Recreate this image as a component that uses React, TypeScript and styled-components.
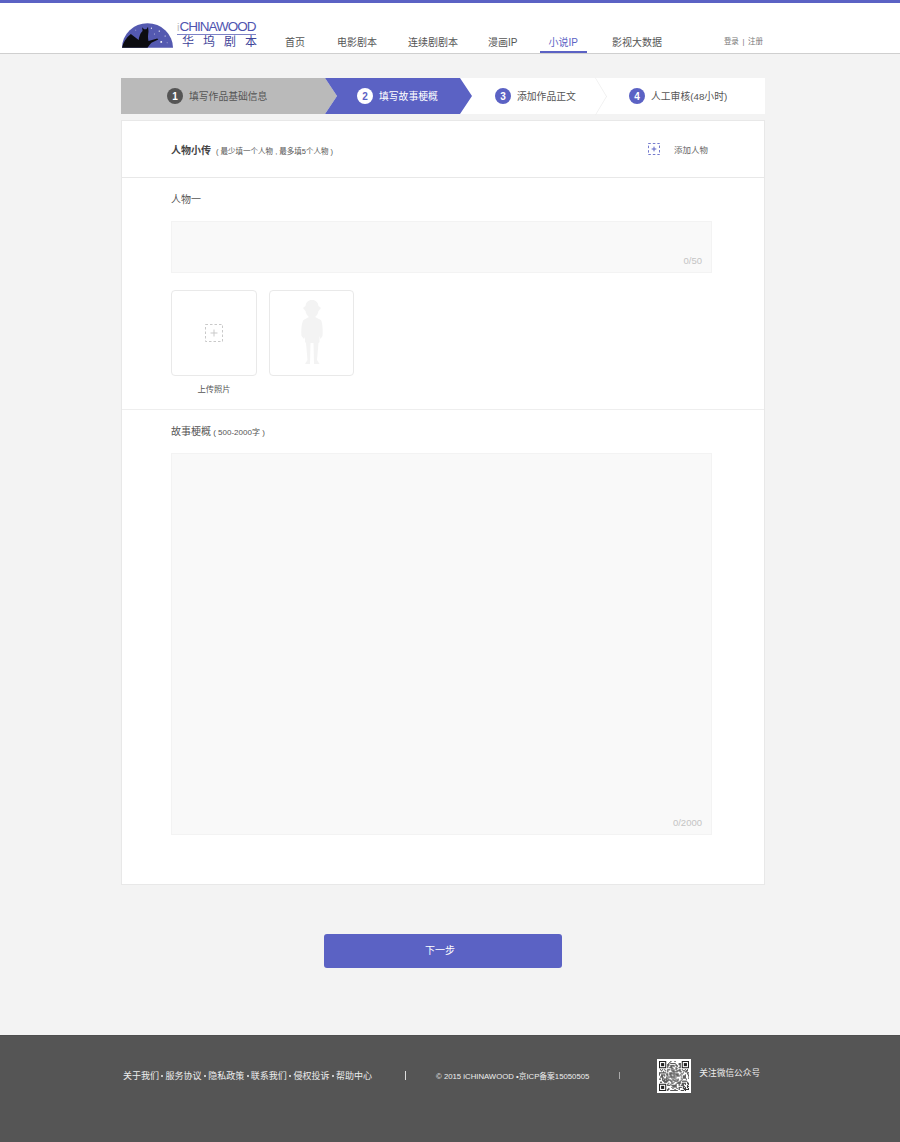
import React from 'react'
import styled, { createGlobalStyle } from 'styled-components'

const CJK = `"Liberation Sans", "Noto Sans CJK SC", sans-serif`
const PURPLE = '#5b62c4'

const GlobalStyle = createGlobalStyle`
  html, body {
    margin: 0;
    padding: 0;
    background: #f3f3f3;
    font-family: ${CJK};
  }
  * { box-sizing: border-box; }
`

const NAV = ['首页', '电影剧本', '连续剧剧本', '漫画IP', '小说IP', '影视大数据']
const NAV_GAPS = [0, 32, 31, 30, 31, 34]
const STEPS = ['填写作品基础信息', '填写故事梗概', '添加作品正文', '人工审核(48小时)']
const LINKS = ['关于我们', '服务协议', '隐私政策', '联系我们', '侵权投诉', '帮助中心']

const Logo = () => (
  <LogoBox>
    <svg width="51" height="26" viewBox="0 0 52 26">
      <path d="M0 25 A26 25 0 0 1 52 25 Z" fill="#5459b0" />
      <path
        d="M0 25 C1 20 4 15 9 11 L13 14 L17 17 C18 12 19 10 21 8 L20.500 4 L22.500 6 L25 6 L26.500 3.500 L27 8 C27 11 26 13 27 18 L36 15.500 L37 16.500 L30 20 C28 22 27 24 26 25 Z"
        fill="#0c0c10"
      />
      <g fill="#fff">
        <circle cx="30" cy="5" r=".6" />
        <circle cx="38" cy="8" r=".7" />
        <circle cx="44" cy="13" r=".6" />
        <circle cx="40" cy="19" r="1" />
        <circle cx="33" cy="11" r=".5" />
        <circle cx="14" cy="7" r=".5" />
        <circle cx="46" cy="20" r=".5" />
      </g>
    </svg>
    <LogoText>
      <LogoEn>
        <LogoI>i</LogoI>CHINAWOOD
      </LogoEn>
      <LogoCn>华坞剧本</LogoCn>
    </LogoText>
  </LogoBox>
)

const PlusBox = ({ size, color }: { size: number; color: string }) => (
  <svg width={size} height={size} viewBox="0 0 18 18">
    <rect
      x=".5"
      y=".5"
      width="17"
      height="17"
      fill="none"
      stroke={color}
      strokeDasharray="2.500 2"
      vectorEffect="non-scaling-stroke"
    />
    <path d="M9 5.500v7M5.500 9h7" stroke={color} vectorEffect="non-scaling-stroke" />
  </svg>
)

const Silhouette = () => (
  <svg width="24" height="66" viewBox="0 0 24 66">
    <path
      d="M12 0c4 0 6 2.500 6.500 6l2.500 2-2.500 3c-.5 3-2 5-3.500 6l6 3c1.500 3 2 10 1.500 16l-2 3-1-3v6l-1 1-1.500 17 2.500 4H14l-.5-21h-3L10 64H5l2.500-4L6 43l-1-1v-5l-1 2-2.500-3C1 30 1.500 23 3.500 20l5.500-3c-1.500-1-3-3-3.500-6L3 8l2.500-2C6 2.500 8 0 12 0z"
      fill="#f3f3f3"
    />
  </svg>
)

// 二维码只是图形，按固定种子铺点
const QrCode = () => {
  const n = 29
  const cells: React.ReactElement[] = []
  let seed = 7
  const inFinder = (x: number, y: number) =>
    (x < 8 && y < 8) || (x > n - 9 && y < 8) || (x < 8 && y > n - 9)
  for (let y = 0; y < n; y++) {
    for (let x = 0; x < n; x++) {
      seed = (seed * 137 + 59) % 1009
      if (!inFinder(x, y) && seed % 2 === 0) {
        cells.push(<rect key={`${x}-${y}`} x={x} y={y} width="1" height="1" />)
      }
    }
  }
  const finder = (x: number, y: number) => (
    <g key={`f${x}${y}`}>
      <rect x={x + 0.5} y={y + 0.5} width="6" height="6" fill="none" stroke="#222" />
      <rect x={x + 2} y={y + 2} width="3" height="3" />
    </g>
  )
  return (
    <QrBox>
      <svg width="30" height="30" viewBox="0 0 29 29" fill="#222">
        {cells}
        {finder(0, 0)}
        {finder(22, 0)}
        {finder(0, 22)}
      </svg>
    </QrBox>
  )
}

const App = () => {
  return (
    <>
      <GlobalStyle />
      <Header>
        <HeaderInner>
          <Logo />
          <Nav>
            {NAV.map((item, i) => (
              <NavItem key={item} $active={i === 4} $gap={NAV_GAPS[i]}>
                {item}
              </NavItem>
            ))}
          </Nav>
          <Auth>登录 | 注册</Auth>
        </HeaderInner>
      </Header>

      <Main>
        <Steps>
          {STEPS.map((label, i) => (
            <Step key={label} $index={i}>
              <StepNumber $index={i}>{i + 1}</StepNumber>
              {label}
            </Step>
          ))}
        </Steps>

        <Card>
          <CardHead>
            <CardTitle>
              人物小传
              <CardHint>( 最少填一个人物 , 最多填5个人物 )</CardHint>
            </CardTitle>
            <AddPerson>
              <PlusBox size={12} color="#5b62c4" />
              添加人物
            </AddPerson>
          </CardHead>

          <PersonSection>
            <FieldLabel>人物一</FieldLabel>
            <TextField $height={52}>
              <Count>0/50</Count>
            </TextField>
            <Photos>
              <PhotoColumn>
                <PhotoTile $width={86}>
                  <PlusBox size={18} color="#c9c9c9" />
                </PhotoTile>
                <PhotoCaption>上传照片</PhotoCaption>
              </PhotoColumn>
              <PhotoTile $width={85}>
                <Silhouette />
              </PhotoTile>
            </Photos>
          </PersonSection>

          <StorySection>
            <FieldLabel>
              故事梗概<SmallNote> ( 500-2000字 )</SmallNote>
            </FieldLabel>
            <TextField $height={382}>
              <Count>0/2000</Count>
            </TextField>
          </StorySection>
        </Card>

        <NextButton>下一步</NextButton>
      </Main>

      <Footer>
        <FooterLinks>
          {LINKS.map((link, i) => (
            <React.Fragment key={link}>
              {i > 0 && <Dot />}
              {link}
            </React.Fragment>
          ))}
        </FooterLinks>
        <FooterBar $left={33} />
        <Copyright>© 2015 iCHINAWOOD •京ICP备案15050505</Copyright>
        <FooterBar $left={30} $thin />
        <QrCode />
        <Follow>关注微信公众号</Follow>
      </Footer>
    </>
  )
}

const Header = styled.header`
  height: 54px;
  background: #fff;
  border-top: 3px solid ${PURPLE};
  border-bottom: 1px solid #cfcfcf;
`

const HeaderInner = styled.div`
  display: flex;
  align-items: flex-end;
  height: 50px;
  margin-left: 122px;
  width: 641px;
`

const LogoBox = styled.div`
  display: flex;
  align-items: flex-end;
  height: 46px;
  padding-bottom: 4px;
  width: 163px;
  svg { display: block; flex: none; }
`

const LogoText = styled.div`
  display: flex;
  flex-direction: column;
  margin-left: 4px;
  width: 79px;
`

const LogoEn = styled.div`
  font-size: 13.500px;
  line-height: 13px;
  letter-spacing: -1px;
  color: #4f55b0;
  border-bottom: 1px solid #7d82c6;
  white-space: nowrap;
`

const LogoI = styled.span`
  color: #bbb;
  font-size: 11px;
  margin-right: 1px;
`

const LogoCn = styled.div`
  font-size: 12px;
  line-height: 14px;
  letter-spacing: 9px;
  padding-left: 5px;
  color: #3f4499;
  white-space: nowrap;
`

const Nav = styled.nav`
  display: flex;
  flex: 1;
`

const NavItem = styled.a<{ $active?: boolean; $gap: number }>`
  position: relative;
  margin-left: ${(p) => p.$gap}px;
  font-size: 10px;
  line-height: 13px;
  padding-bottom: 4px;
  white-space: nowrap;
  color: ${(p) => (p.$active ? PURPLE : '#555')};
  ${(p) =>
    p.$active &&
    `&::after {
      content: '';
      position: absolute;
      left: -8px;
      right: -9px;
      bottom: 0;
      height: 2px;
      background: ${PURPLE};
    }`}
`

const Auth = styled.div`
  font-size: 7.500px;
  line-height: 10px;
  word-spacing: 1.500px;
  padding-bottom: 6px;
  color: #777;
  white-space: nowrap;
`

const Main = styled.main`
  width: 644px;
  margin-left: 121px;
  padding-top: 24px;
  height: 981px;
`

const Steps = styled.div`
  display: flex;
  height: 36px;
  background: #fff;
`

const stepWidths = [216, 147, 136, 169]
const stepPadding = [46, 32, 23, 21]
const stepBg = ['#bababa', PURPLE, 'transparent', 'transparent']
const stepColor = ['#555', '#fff', '#555', '#555']

const Step = styled.div<{ $index: number }>`
  position: relative;
  display: flex;
  align-items: center;
  gap: 6px;
  flex: none;
  font-size: 9.800px;
  white-space: nowrap;
  width: ${(p) => stepWidths[p.$index]}px;
  padding-left: ${(p) => stepPadding[p.$index]}px;
  color: ${(p) => stepColor[p.$index]};
  background: ${(p) => stepBg[p.$index]};
  ${(p) => p.$index === 0 && 'clip-path: polygon(0 0, calc(100% - 12px) 0, 100% 50%, calc(100% - 12px) 100%, 0 100%);'}
  ${(p) =>
    p.$index === 1 &&
    'margin-left: -12px; clip-path: polygon(0 0, calc(100% - 12px) 0, 100% 50%, calc(100% - 12px) 100%, 0 100%, 12px 50%);'}
  ${(p) =>
    p.$index === 2 &&
    `&::after {
      content: '';
      position: absolute;
      top: 5px;
      right: -1px;
      width: 26px;
      height: 26px;
      border-top: 1px solid #eee;
      border-right: 1px solid #eee;
      transform: scaleX(.6) rotate(45deg);
    }`}
`

const StepNumber = styled.span<{ $index: number }>`
  display: flex;
  align-items: center;
  justify-content: center;
  width: 16px;
  height: 16px;
  border-radius: 50%;
  font-size: 10px;
  font-weight: 700;
  background: ${(p) => (p.$index === 0 ? '#555' : p.$index === 1 ? '#fff' : PURPLE)};
  color: ${(p) => (p.$index === 1 ? PURPLE : '#fff')};
`

const Card = styled.section`
  margin-top: 6px;
  height: 765px;
  background: #fff;
  border: 1px solid #e8e8e8;
`

const CardHead = styled.div`
  display: flex;
  align-items: center;
  justify-content: space-between;
  height: 57px;
  padding: 0 56px 0 49px;
  border-bottom: 1px solid #e8e8e8;
`

const CardTitle = styled.h2`
  margin: 0;
  font-size: 10px;
  font-weight: 700;
  color: #444;
`

const CardHint = styled.span`
  margin-left: 5px;
  font-size: 7.500px;
  font-weight: 400;
  color: #555;
`

const AddPerson = styled.div`
  display: flex;
  align-items: center;
  gap: 14px;
  font-size: 8.500px;
  color: #666;
`

const PersonSection = styled.div`
  height: 232px;
  padding: 15px 52px 0 49px;
  border-bottom: 1px solid #eee;
`

const StorySection = styled.div`
  padding: 15px 52px 0 49px;
`

const FieldLabel = styled.div`
  height: 14px;
  font-size: 10px;
  line-height: 14px;
  color: #555;
`

const SmallNote = styled.span`
  font-size: 8px;
`

const TextField = styled.div<{ $height: number }>`
  display: flex;
  align-items: flex-end;
  justify-content: flex-end;
  height: ${(p) => p.$height}px;
  margin-top: 14px;
  padding: 0 9px 5px 0;
  background: #f9f9f9;
  border: 1px solid #f3f3f3;
`

const Count = styled.span`
  font-size: 9.500px;
  line-height: 12px;
  color: #c4c4c4;
`

const Photos = styled.div`
  display: flex;
  gap: 12px;
  margin-top: 17px;
`

const PhotoColumn = styled.div`
  display: flex;
  flex-direction: column;
  align-items: center;
`

const PhotoTile = styled.div<{ $width: number }>`
  display: flex;
  align-items: center;
  justify-content: center;
  width: ${(p) => p.$width}px;
  height: 86px;
  border: 1px solid #e9e9e9;
  border-radius: 4px;
  background: #fff;
`

const PhotoCaption = styled.div`
  margin-top: 7px;
  font-size: 8.300px;
  line-height: 12px;
  color: #555;
`

const NextButton = styled.button`
  display: block;
  width: 238px;
  height: 34px;
  margin: 49px 0 0 203px;
  padding: 0 6px 3px 0;
  border: 0;
  border-radius: 3px;
  background: ${PURPLE};
  color: #fff;
  font-family: ${CJK};
  font-size: 10px;
`

const Footer = styled.footer`
  display: flex;
  align-items: center;
  height: 107px;
  padding: 0 0 27px 123px;
  background: #555;
  border-top: 1px solid #4e4e4e;
  color: #eee;
  font-size: 9px;
  white-space: nowrap;
`

const FooterLinks = styled.div`
  display: flex;
  align-items: center;
`

const Dot = styled.i`
  width: 2px;
  height: 2px;
  margin: 0 2.300px;
  background: #eee;
  border-radius: 50%;
`

const FooterBar = styled.span<{ $left: number; $thin?: boolean }>`
  width: 1px;
  height: ${(p) => (p.$thin ? 7 : 9)}px;
  margin-left: ${(p) => p.$left}px;
  background: ${(p) => (p.$thin ? '#aaa' : '#ddd')};
`

const Copyright = styled.div`
  margin-left: 30px;
  font-size: 7.750px;
`

const QrBox = styled.div`
  display: flex;
  align-items: center;
  justify-content: center;
  width: 34px;
  height: 34px;
  margin: 0 0 0 37px;
  background: #fff;
`

const Follow = styled.div`
  margin: 0 0 6px 8px;
  font-size: 8.700px;
`

export default App
